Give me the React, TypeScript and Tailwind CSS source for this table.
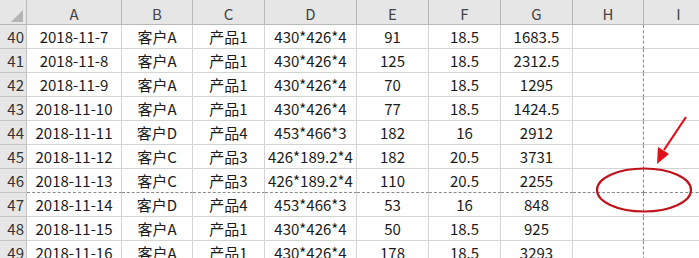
import React from "react";

const cols = ["A", "B", "C", "D", "E", "F", "G", "H", "I"];
const widths = [95, 71, 72, 92, 72, 72, 72, 71, 70];

const rows: [number, string[]][] = [
  [40, ["2018-11-7", "客户A", "产品1", "430*426*4", "91", "18.5", "1683.5"]],
  [41, ["2018-11-8", "客户A", "产品1", "430*426*4", "125", "18.5", "2312.5"]],
  [42, ["2018-11-9", "客户A", "产品1", "430*426*4", "70", "18.5", "1295"]],
  [43, ["2018-11-10", "客户A", "产品1", "430*426*4", "77", "18.5", "1424.5"]],
  [44, ["2018-11-11", "客户D", "产品4", "453*466*3", "182", "16", "2912"]],
  [45, ["2018-11-12", "客户C", "产品3", "426*189.2*4", "182", "20.5", "3731"]],
  [46, ["2018-11-13", "客户C", "产品3", "426*189.2*4", "110", "20.5", "2255"]],
  [47, ["2018-11-14", "客户D", "产品4", "453*466*3", "53", "16", "848"]],
  [48, ["2018-11-15", "客户A", "产品1", "430*426*4", "50", "18.5", "925"]],
  [49, ["2018-11-16", "客户A", "产品1", "430*426*4", "178", "18.5", "3293"]],
];

const font = { fontFamily: '"Noto Sans CJK SC", "Noto Sans", sans-serif' };

export default function App() {
  return (
    <div className="relative w-[699px] h-[258px] overflow-hidden bg-white" style={font}>
      <div className="flex flex-col">
        {/* header */}
        <div className="flex h-[25px] bg-[#e6e6e6]">
          <div className="w-[27px] shrink-0 border-r border-b border-[#b8b8b8] relative flex items-end justify-end">
            <svg width="12" height="12" className="mb-[2px] mr-[3px]">
              <polygon points="12,0 12,12 0,12" fill="#b4b4b4" />
            </svg>
          </div>
          {cols.map((c, i) => (
            <div
              key={c}
              style={{ width: widths[i] }}
              className="shrink-0 border-r border-b border-[#b8b8b8] flex items-center justify-center text-[15px] text-[#444] leading-none pt-[2px]"
            >
              {c}
            </div>
          ))}
        </div>
        {rows.map(([n, vals]) => (
          <div key={n} className="flex h-[24px]">
            <div className="w-[27px] shrink-0 bg-[#e6e6e6] border-r border-b border-[#c4c4c4] flex items-end justify-end pr-[2px] pb-[1px] text-[15px] text-[#333] leading-[20px]">
              {n}
            </div>
            {widths.map((w, i) => {
              const v = vals[i] ?? "";
              const dashB = n === 46;
              const dashR = i === 7;
              return (
                <div
                  key={i}
                  style={{ width: w }}
                  className={
                    "shrink-0 border-r border-b border-[#d4d4d4] flex items-end justify-center pb-[1px] text-[15px] text-[#1a1a1a] leading-[20px] whitespace-nowrap " +
                    (dashB ? "[border-bottom-style:dashed] border-b-[#8a8a8a] " : "") +
                    (dashR ? "[border-right-style:dashed] border-r-[#8a8a8a] " : "")
                  }
                >
                  {v}
                </div>
              );
            })}
          </div>
        ))}
      </div>
      {/* annotation overlay */}
      <svg className="absolute left-0 top-0 pointer-events-none" width="699" height="258">
        <ellipse cx="644" cy="190" rx="47" ry="21.5" fill="none" stroke="#c0121a" strokeWidth="2.2" />
        <line x1="686" y1="117" x2="664" y2="150" stroke="#e0101a" strokeWidth="2.2" />
        <polygon points="657,164 658,147 669,154" fill="#e0101a" />
      </svg>
    </div>
  );
}
